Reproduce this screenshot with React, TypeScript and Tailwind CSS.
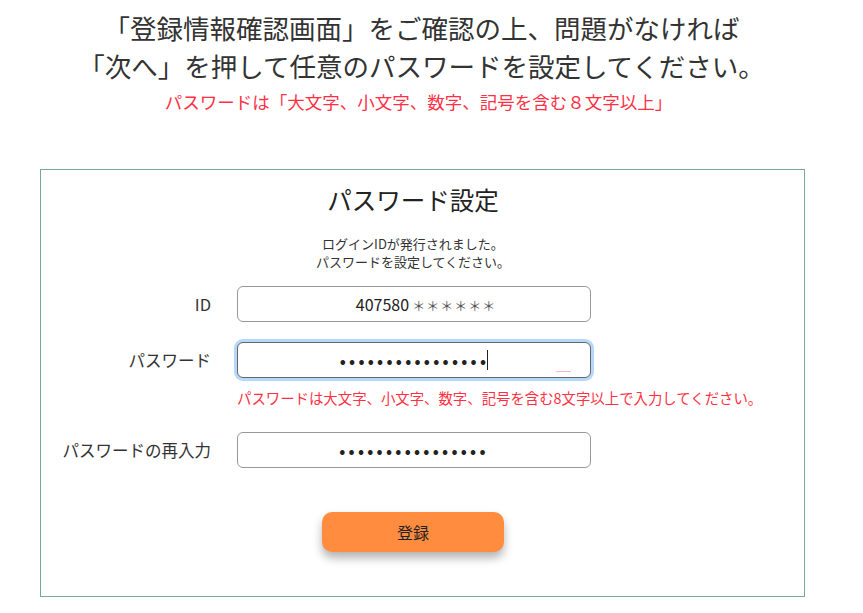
const font = "font-['Noto_Sans_CJK_JP','Noto_Sans',sans-serif]";

function Field({
  label,
  children,
  focused,
}: {
  label: string;
  children: React.ReactNode;
  focused?: boolean;
}) {
  return (
    <div className="flex items-center">
      <div className="w-[170px] text-right text-[16.5px] text-[#333]">{label}</div>
      <div
        className={
          focused
            ? "relative ml-[26px] flex h-[36px] w-[354px] items-center justify-center rounded-[6px] border border-[#666] bg-white shadow-[0_0_0_3px_#b5d8fc]"
            : "relative ml-[26px] flex h-[36px] w-[354px] items-center justify-center rounded-[6px] border border-[#999] bg-white"
        }
      >
        {children}
        {focused && (
          <span className="absolute left-[318px] top-[28px] h-[1px] w-[15px] bg-[#f7b7bd]" />
        )}
      </div>
    </div>
  );
}

function Dots({ caret }: { caret?: boolean }) {
  return (
    <span className="flex items-center">
      <span className="text-[16px] font-bold tracking-[3.3px] text-[#222]">••••••••••••••••</span>
      {caret && <span className="ml-[-2px] h-[20px] w-[1px] bg-[#222]" />}
    </span>
  );
}

export default function App() {
  return (
    <div className={`min-h-screen bg-white ${font}`}>
      {/* Intro */}
      <div className="pt-[9px] pr-[20px] text-center">
        <p className="text-[26.5px] leading-[38px] text-[#333]">
          「登録情報確認画面」をご確認の上、問題がなければ
        </p>
        <p className="text-[26.5px] leading-[38px] text-[#333]">
          「次へ」を押して任意のパスワードを設定してください。
        </p>
        <p className="mt-[6px] pr-[6px] text-[17.5px] leading-[22px] text-[#ff3045]">
          パスワードは「大文字、小文字、数字、記号を含む８文字以上」
        </p>
      </div>

      {/* Card */}
      <div className="ml-[40px] mt-[56px] h-[428px] w-[765px] border border-[#7aa898] pt-[14px] pr-[19px]">
        <h1 className="text-center text-[24.5px] leading-[32px] text-[#222]">パスワード設定</h1>
        <div className="mt-[19px] text-center text-[13px] leading-[18px] text-[#333]">
          <p>ログインIDが発行されました。</p>
          <p>パスワードを設定してください。</p>
        </div>

        <div className="mt-[15px] flex flex-col">
          <Field label="ID">
            <span className="pl-[24px] text-[16px] text-[#222]">
              407580
              <span className="ml-[3px] text-[13px] tracking-[1px] text-[#555]">＊＊＊＊＊＊</span>
            </span>
          </Field>
          <div className="mt-[20px]">
            <Field label="パスワード" focused>
              <Dots caret />
            </Field>
          </div>
          <p className="ml-[196px] mt-[10px] text-[14.4px] leading-[20px] text-[#ff3045]">
            パスワードは大文字、小文字、数字、記号を含む8文字以上で入力してください。
          </p>
          <div className="mt-[24px]">
            <Field label="パスワードの再入力">
              <Dots />
            </Field>
          </div>
        </div>

        <div className="mt-[44px] flex justify-center">
          <button className="h-[40px] w-[182px] rounded-[10px] bg-[#ff8c3f] text-[16px] text-[#222] shadow-[0_6px_10px_rgba(0,0,0,0.3)]">
            登録
          </button>
        </div>
      </div>
    </div>
  );
}
